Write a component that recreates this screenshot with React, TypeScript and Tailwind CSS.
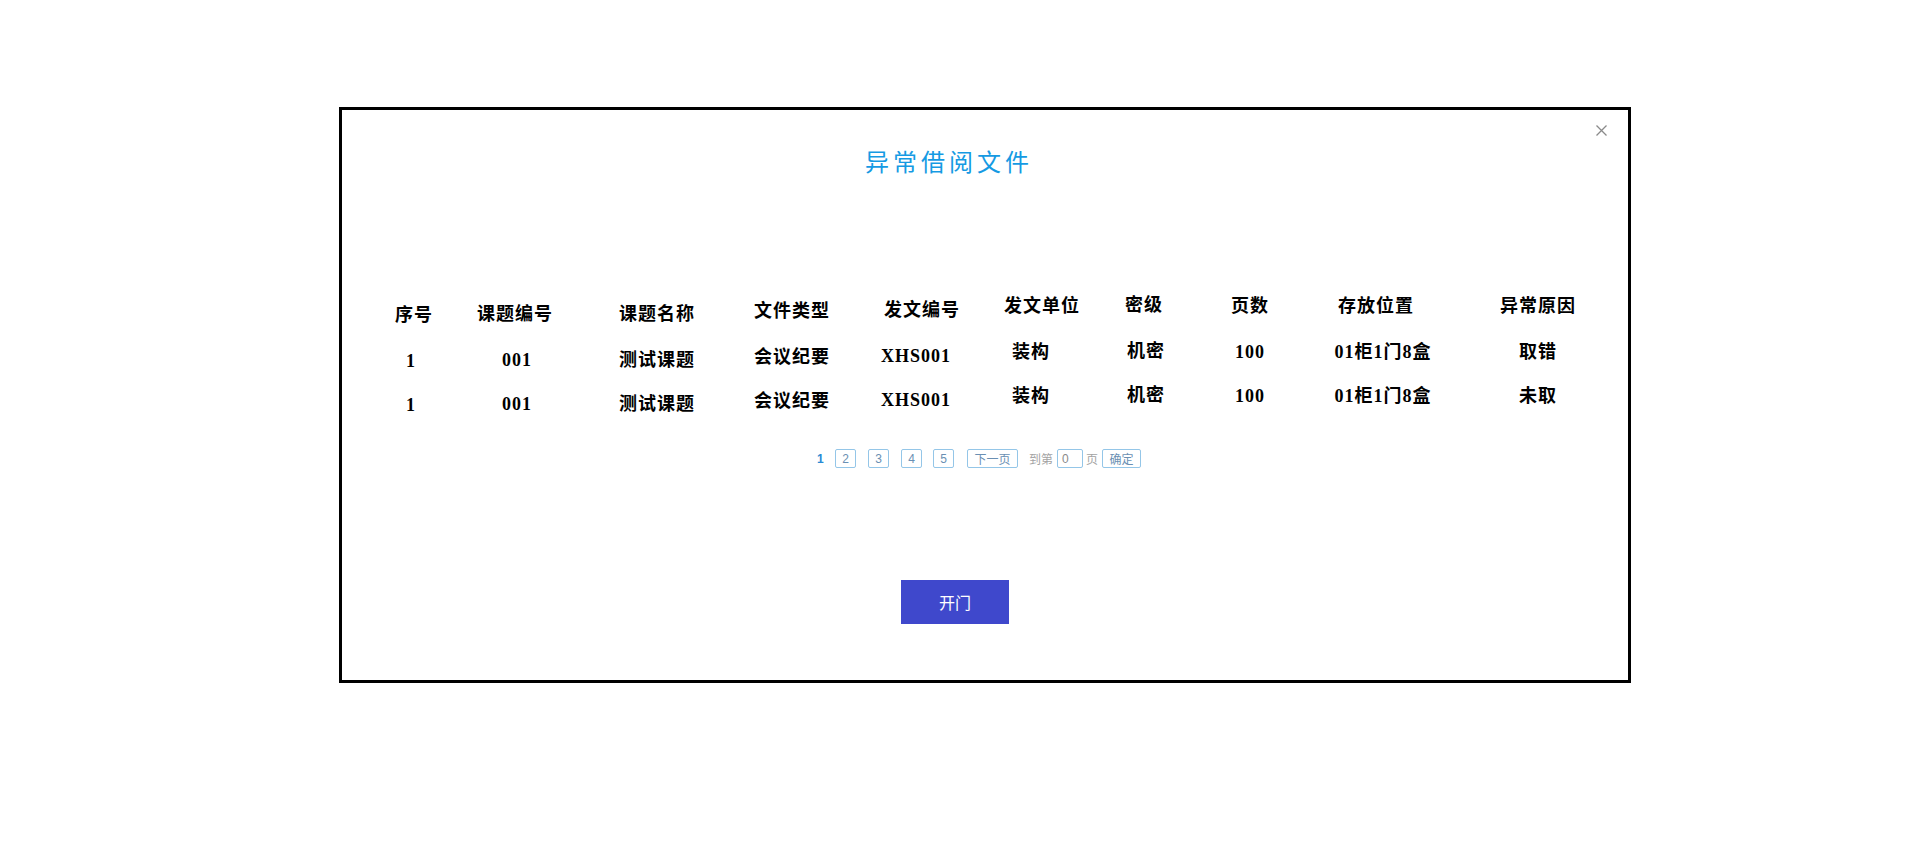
import React from "react";

type Col = {
  head: string;
  rows: [string, string];
  w: string;
  pt: string;
  dataShift: string;
};

const cols: Col[] = [
  { head: "序号", rows: ["1", "1"], w: "w-[88px]", pt: "pt-[10px]", dataShift: "pr-[6px]" },
  { head: "课题编号", rows: ["001", "001"], w: "w-[114px]", pt: "pt-[9px]", dataShift: "pl-[4px]" },
  { head: "课题名称", rows: ["测试课题", "测试课题"], w: "w-[170px]", pt: "pt-[9px]", dataShift: "" },
  { head: "文件类型", rows: ["会议纪要", "会议纪要"], w: "w-[100px]", pt: "pt-[6px]", dataShift: "" },
  { head: "发文编号", rows: ["XHS001", "XHS001"], w: "w-[160px]", pt: "pt-[5px]", dataShift: "pr-[12px]" },
  { head: "发文单位", rows: ["装构", "装构"], w: "w-[80px]", pt: "pt-[1px]", dataShift: "pr-[22px]" },
  { head: "密级", rows: ["机密", "机密"], w: "w-[124px]", pt: "pt-[0px]", dataShift: "pl-[4px]" },
  { head: "页数", rows: ["100", "100"], w: "w-[88px]", pt: "pt-[1px]", dataShift: "" },
  { head: "存放位置", rows: ["01柜1门8盒", "01柜1门8盒"], w: "w-[164px]", pt: "pt-[1px]", dataShift: "pl-[14px]" },
  { head: "异常原因", rows: ["取错", "未取"], w: "w-[160px]", pt: "pt-[1px]", dataShift: "" },
];

const cellFont = "font-['Liberation_Serif','Noto_Sans_CJK_SC',serif]";

export default function App() {
  return (
    <div className="min-h-screen bg-white pt-[107px] pl-[339px]">
      <div className="relative w-[1292px] h-[576px] border-[3px] border-black bg-white">
        {/* close */}
        <button className="absolute top-[14px] right-[20px] w-[13px] h-[13px] flex items-center justify-center">
          <svg width="13" height="13" viewBox="0 0 13 13" fill="none">
            <path d="M1.5 1.5 L11.5 11.5 M11.5 1.5 L1.5 11.5" stroke="#8a8a8a" strokeWidth="1.3" />
          </svg>
        </button>

        {/* title */}
        <div className="pt-[39px] pl-[523px]">
          <h2 className="text-[24px] leading-[24px] tracking-[4px] text-[#159ae3] font-['Noto_Sans_CJK_SC','Microsoft_YaHei',sans-serif] font-normal whitespace-nowrap">
            异常借阅文件
          </h2>
        </div>

        {/* table */}
        <div className={`mt-[108px] pl-[28px] flex items-start ${cellFont} font-bold text-[18px] tracking-[1px] text-black`}>
          {cols.map((c, i) => (
            <div key={i} className={`${c.w} ${c.pt} flex flex-col items-center`}>
              <div className="h-[48px] flex items-center justify-center whitespace-nowrap leading-none">
                {c.head}
              </div>
              {c.rows.map((r, j) => (
                <div
                  key={j}
                  className={`h-[44px] w-full flex items-center justify-center whitespace-nowrap leading-none ${c.dataShift}`}
                >
                  {r}
                </div>
              ))}
            </div>
          ))}
        </div>

        {/* pagination */}
        <div className="mt-[22px] pl-[475px] flex items-center h-[19px] text-[12px] font-['Noto_Sans_CJK_SC','Liberation_Sans',sans-serif] leading-none">
          <span className="font-bold text-[#2a8ad4] font-['Liberation_Sans',sans-serif] w-[7px]">1</span>
          <span className="ml-[11px] w-[21px] h-[19px] border border-[#94c6e8] rounded-[2px] flex items-center justify-center text-[#6a8fb3] font-['Liberation_Sans',sans-serif]">2</span>
          <span className="ml-[12px] w-[21px] h-[19px] border border-[#94c6e8] rounded-[2px] flex items-center justify-center text-[#6a8fb3] font-['Liberation_Sans',sans-serif]">3</span>
          <span className="ml-[12px] w-[21px] h-[19px] border border-[#94c6e8] rounded-[2px] flex items-center justify-center text-[#6a8fb3] font-['Liberation_Sans',sans-serif]">4</span>
          <span className="ml-[11px] w-[21px] h-[19px] border border-[#94c6e8] rounded-[2px] flex items-center justify-center text-[#6a8fb3] font-['Liberation_Sans',sans-serif]">5</span>
          <span className="ml-[13px] w-[51px] h-[19px] border border-[#94c6e8] rounded-[2px] flex items-center justify-center text-[#6a8fb3]">下一页</span>
          <span className="ml-[11px] text-[#a3a3a3]">到第</span>
          <span className="ml-[4px] w-[26px] h-[19px] border border-[#94c6e8] rounded-[2px] flex items-center pl-[4px] text-[#8a8a8a] font-['Liberation_Sans',sans-serif]">0</span>
          <span className="ml-[3px] text-[#a3a3a3]">页</span>
          <span className="ml-[4px] w-[39px] h-[19px] border border-[#94c6e8] rounded-[2px] flex items-center justify-center text-[#6a8fb3]">确定</span>
        </div>

        {/* open button */}
        <div className="mt-[112px] pl-[559px]">
          <button className="w-[108px] h-[44px] bg-[#3f48cc] text-white text-[16px] font-['Noto_Sans_CJK_SC',sans-serif] flex items-center justify-center">
            开门
          </button>
        </div>
      </div>
    </div>
  );
}
